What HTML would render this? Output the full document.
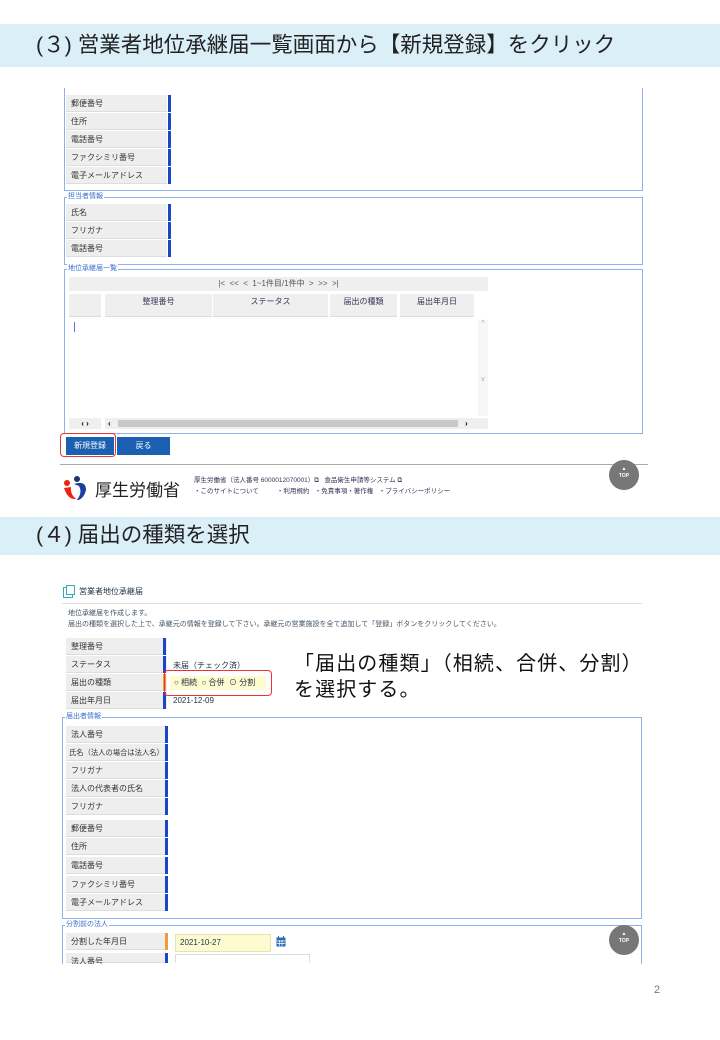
<!DOCTYPE html>
<html><head><meta charset="utf-8"><style>
*{margin:0;padding:0;box-sizing:border-box}
body{width:720px;height:1040px;background:#fff;position:relative;overflow:hidden;font-family:"Liberation Sans","Noto Sans CJK JP",sans-serif}
.a{position:absolute}
.hb{position:absolute;left:0;width:720px;background:#dbeff9;color:#222;font-size:21.5px;padding-left:36px}
.l{position:absolute;width:101px;height:17px;background:#eeeeee;font-size:8px;color:#333;line-height:17px;padding-left:5px;border-bottom:1px solid #ddd;white-space:nowrap;overflow:visible}
.b{position:absolute;width:3px;height:17px;background:#1a47c8}
.o{background:#f39a3a}
.fs{position:absolute;border:1px solid #8fb0ea}
.lg{position:absolute;top:-6px;left:2px;background:#fff;font-size:7px;color:#3a6fd0;padding:0 1px;line-height:10px}
.th{position:absolute;top:294px;height:23px;background:#efefef;font-size:8px;color:#335;text-align:center;line-height:16px;border-bottom:1px solid #ddd}
.t{font-size:8px;color:#456;position:absolute}
</style></head><body>
<div class="hb" style="top:24px;height:43px;line-height:43px">(３) 営業者地位承継届一覧画面から【新規登録】をクリック</div>

<div class="fs" style="left:64px;top:88px;width:579px;height:103px;border-top:none"></div>
<div class="l" style="left:66px;top:95px">郵便番号</div><div class="b" style="left:168px;top:95px"></div>
<div class="l" style="left:66px;top:113px">住所</div><div class="b" style="left:168px;top:113px"></div>
<div class="l" style="left:66px;top:131px">電話番号</div><div class="b" style="left:168px;top:131px"></div>
<div class="l" style="left:66px;top:149px">ファクシミリ番号</div><div class="b" style="left:168px;top:149px"></div>
<div class="l" style="left:66px;top:167px">電子メールアドレス</div><div class="b" style="left:168px;top:167px"></div>

<div class="fs" style="left:64px;top:197px;width:579px;height:68px"><span class="lg">担当者情報</span></div>
<div class="l" style="left:66px;top:204px">氏名</div><div class="b" style="left:168px;top:204px"></div>
<div class="l" style="left:66px;top:222px">フリガナ</div><div class="b" style="left:168px;top:222px"></div>
<div class="l" style="left:66px;top:240px">電話番号</div><div class="b" style="left:168px;top:240px"></div>

<div class="fs" style="left:64px;top:269px;width:579px;height:165px"><span class="lg">地位承継届一覧</span></div>
<div class="a" style="left:69px;top:277px;width:419px;height:14px;background:#efefef;font-size:8px;color:#555;text-align:center;line-height:14px">|&lt;&nbsp; &lt;&lt;&nbsp; &lt;&nbsp; 1~1件目/1件中&nbsp; &gt;&nbsp; &gt;&gt;&nbsp; &gt;|</div>
<div class="th" style="left:69px;width:32px"></div>
<div class="th" style="left:105px;width:107px">整理番号</div>
<div class="th" style="left:213px;width:115px">ステータス</div>
<div class="th" style="left:330px;width:67px">届出の種類</div>
<div class="th" style="left:400px;width:74px">届出年月日</div>
<div class="a" style="left:74px;top:322px;width:1px;height:10px;background:#5a7ad8"></div>
<div class="a" style="left:478px;top:320px;width:10px;height:96px;background:#f7f7f7;font-size:7px;color:#aaa;text-align:center">^<br><br><br><br><br><br><br><br>v</div>
<div class="a" style="left:69px;top:418px;width:32px;height:11px;background:#efefef;font-size:8px;line-height:11px;text-align:center;font-weight:bold">‹ ›</div>
<div class="a" style="left:105px;top:418px;width:383px;height:11px;background:#efefef"></div>
<div class="a" style="left:118px;top:420px;width:340px;height:7px;background:#c9c9c9"></div>
<div class="a" style="left:108px;top:418px;font-size:8px;font-weight:bold;line-height:11px">‹</div>
<div class="a" style="left:465px;top:418px;font-size:8px;font-weight:bold;line-height:11px">›</div>

<div class="a" style="left:66px;top:437px;width:48px;height:18px;background:#1a5fb0;color:#fff;font-size:8px;text-align:center;line-height:18px">新規登録</div>
<div class="a" style="left:117px;top:437px;width:53px;height:18px;background:#1a5fb0;color:#fff;font-size:8px;text-align:center;line-height:18px">戻る</div>
<div class="a" style="left:60px;top:433px;width:56px;height:24px;border:1px solid #e33;border-radius:4px"></div>

<div class="a" style="left:60px;top:464px;width:588px;height:1px;background:#aaa"></div>
<svg class="a" style="left:62px;top:474px" width="32" height="28" viewBox="0 0 32 28"><circle cx="5" cy="9" r="3" fill="#e21"/><path d="M2 14 Q6 26 14 25 Q8 20 9 13Z" fill="#e21"/><circle cx="15" cy="5" r="3" fill="#236"/><path d="M12 10 Q24 6 24 16 Q22 25 14 27 Q21 19 17 12Z" fill="#1a3fa0"/></svg>
<div class="a" style="left:95px;top:476px;font-size:17px;color:#222">厚生労働省</div>
<div class="a" style="left:194px;top:475px;font-size:6.5px;color:#335;line-height:11px">厚生労働省（法人番号 6000012070001）⧉&nbsp;&nbsp; 食品衛生申請等システム ⧉<br>・このサイトについて&nbsp;&nbsp;&nbsp;&nbsp;&nbsp;&nbsp;&nbsp;&nbsp;&nbsp;&nbsp;・利用規約&nbsp;&nbsp;&nbsp;・免責事項・著作権&nbsp;&nbsp;&nbsp;・プライバシーポリシー</div>
<div class="a" style="left:609px;top:460px;width:30px;height:30px;border-radius:50%;background:#777;color:#fff;text-align:center;font-size:5px;line-height:7px;padding-top:6px">▲<br><b>TOP</b></div>

<div class="a" style="left:0;top:500px;width:720px;height:17px;background:#fff"></div>
<div class="hb" style="top:517px;height:38px;line-height:36px">(４) 届出の種類を選択</div>

<svg class="a" style="left:63px;top:585px" width="12" height="13"><rect x="0.5" y="2.5" width="9" height="10" fill="none" stroke="#3ab" /><rect x="3.5" y="0.5" width="8" height="9" fill="#fff" stroke="#3ab"/></svg>
<div class="a" style="left:79px;top:586px;font-size:8px;color:#234">営業者地位承継届</div>
<div class="a" style="left:62px;top:603px;width:580px;height:1px;background:#ddd"></div>
<div class="t" style="left:68px;top:608px;line-height:11px;font-size:7px">地位承継届を作成します。<br>届出の種類を選択した上で、承継元の情報を登録して下さい。承継元の営業施設を全て追加して「登録」ボタンをクリックしてください。</div>
<div class="l" style="left:66px;top:638px">整理番号</div><div class="b" style="left:163px;top:638px"></div>
<div class="l" style="left:66px;top:656px">ステータス</div><div class="b" style="left:163px;top:656px"></div>
<div class="l" style="left:66px;top:674px">届出の種類</div><div class="b o" style="left:163px;top:674px"></div>
<div class="l" style="left:66px;top:692px">届出年月日</div><div class="b" style="left:163px;top:692px"></div>
<div class="t" style="left:173px;top:660px;color:#234">未届（チェック済）</div>
<div class="a" style="left:170px;top:676px;width:96px;height:14px;background:#fdfbd0;font-size:8px;color:#234;line-height:14px;padding-left:4px">○ 相続&nbsp; ○ 合併&nbsp; ⊙ 分割</div>
<div class="a" style="left:164px;top:670px;width:108px;height:26px;border:1px solid #e33;border-radius:4px"></div>
<div class="t" style="left:173px;top:696px;color:#234">2021-12-09</div>
<div class="a" style="left:294px;top:651px;font-size:20px;letter-spacing:1.1px;line-height:26px;color:#111">「届出の種類」（相続、合併、分割）<br>を選択する。</div>

<div class="fs" style="left:62px;top:717px;width:580px;height:202px"><span class="lg">届出者情報</span></div>
<div class="l" style="left:66px;top:726px">法人番号</div><div class="b" style="left:165px;top:726px"></div>
<div class="l" style="left:66px;top:744px;font-size:7.3px;padding-left:3px">氏名（法人の場合は法人名）</div><div class="b" style="left:165px;top:744px"></div>
<div class="l" style="left:66px;top:762px">フリガナ</div><div class="b" style="left:165px;top:762px"></div>
<div class="l" style="left:66px;top:780px">法人の代表者の氏名</div><div class="b" style="left:165px;top:780px"></div>
<div class="l" style="left:66px;top:798px">フリガナ</div><div class="b" style="left:165px;top:798px"></div>
<div class="l" style="left:66px;top:820px">郵便番号</div><div class="b" style="left:165px;top:820px"></div>
<div class="l" style="left:66px;top:838px">住所</div><div class="b" style="left:165px;top:838px"></div>
<div class="l" style="left:66px;top:857px">電話番号</div><div class="b" style="left:165px;top:857px"></div>
<div class="l" style="left:66px;top:876px">ファクシミリ番号</div><div class="b" style="left:165px;top:876px"></div>
<div class="l" style="left:66px;top:894px">電子メールアドレス</div><div class="b" style="left:165px;top:894px"></div>

<div class="fs" style="left:62px;top:925px;width:580px;height:40px;border-bottom:none"><span class="lg">分割前の法人</span></div>
<div class="l" style="left:66px;top:933px">分割した年月日</div><div class="b o" style="left:165px;top:933px"></div>
<div class="l" style="left:66px;top:953px;height:10px">法人番号</div><div class="b" style="left:165px;top:953px;height:10px"></div>
<div class="a" style="left:175px;top:934px;width:96px;height:18px;background:#fdfbd0;border:1px solid #e6e3b0;font-size:8px;color:#234;line-height:16px;padding-left:4px">2021-10-27</div>
<div class="a" style="left:175px;top:954px;width:135px;height:9px;border:1px solid #ddd;border-bottom:none"></div>
<svg class="a" style="left:276px;top:936px" width="10" height="11"><rect x="0.5" y="1.5" width="9" height="9" fill="#2a6db5"/><rect x="2" y="0" width="1" height="3" fill="#2a6db5"/><rect x="7" y="0" width="1" height="3" fill="#2a6db5"/><path d="M1 5H9M1 7.5H9M3.5 4V10M6 4V10" stroke="#fff" stroke-width=".7"/></svg>
<div class="a" style="left:609px;top:925px;width:30px;height:30px;border-radius:50%;background:#777;color:#fff;text-align:center;font-size:5px;line-height:7px;padding-top:6px">▲<br><b>TOP</b></div>
<div class="a" style="left:0;top:964px;width:720px;height:76px;background:#fff"></div>
<div class="a" style="left:654px;top:984px;font-size:11px;color:#777">2</div>
</body></html>
